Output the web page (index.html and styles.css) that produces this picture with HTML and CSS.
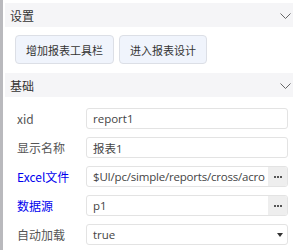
FILE: index.html
```html
<!DOCTYPE html>
<html lang="zh">
  <head>
    <meta charset="UTF-8" />
    <title>属性</title>
    <link rel="stylesheet" href="styles.css">
  </head>
  <body>
    <div class="panel">
      <div class="section-head">
        <span>设置</span>
        <svg class="chev" width="11" height="7" viewBox="0 0 11 7"><path d="M0.5 0.5 L5.5 5.5 L10.5 0.5" fill="none" stroke="#666" stroke-width="1"/></svg>
      </div>
      <div class="actions">
        <button class="btn">增加报表工具栏</button>
        <button class="btn">进入报表设计</button>
      </div>

      <div class="section-head">
        <span>基础</span>
        <svg class="chev" width="11" height="7" viewBox="0 0 11 7"><path d="M0.5 0.5 L5.5 5.5 L10.5 0.5" fill="none" stroke="#666" stroke-width="1"/></svg>
      </div>
      <div class="form">
        <div class="row">
          <label>xid</label>
          <div class="field"><span class="val">report1</span></div>
        </div>
        <div class="row">
          <label>显示名称</label>
          <div class="field"><span class="val">报表1</span></div>
        </div>
        <div class="row">
          <label class="link">Excel文件</label>
          <div class="field">
            <span class="val path">$UI/pc/simple/reports/cross/acro</span>
            <span class="more"><i></i><i></i><i></i></span>
          </div>
        </div>
        <div class="row">
          <label class="link">数据源</label>
          <div class="field">
            <span class="val">p1</span>
            <span class="more"><i></i><i></i><i></i></span>
          </div>
        </div>
        <div class="row">
          <label>自动加载</label>
          <div class="field">
            <span class="val">true</span>
            <span class="caret"></span>
          </div>
        </div>
      </div>
    </div>
  </body>
</html>
```

FILE: styles.css
```css
body {
  margin: 0;
  background: #fff;
  font-family: "Open Sans", "Noto Sans CJK SC", sans-serif;
  font-size: 12px;
  color: #333;
}

.panel {
  border-left: 3px solid #b9b9bd;
  padding: 3px 0 0 2px;
  height: 247px;
}

.section-head {
  height: 24px;
  background: #f5f5f7;
  display: flex;
  align-items: center;
  justify-content: space-between;
  padding: 0 2px 0 5px;
  font-family: "Noto Sans CJK SC", sans-serif;
  font-size: 12px;
  color: #333;
}

.chev {
  margin-top: 2px;
}

.actions {
  display: flex;
  gap: 5px;
  padding: 8px 10px 9px;
}

.btn {
  height: 29px;
  padding: 0 10px;
  border: 1px solid #dcdfe6;
  border-radius: 4px;
  background: #f0f4fc;
  color: #333;
  font-family: "Noto Sans CJK SC", sans-serif;
  font-size: 11px;
}

.form {
  display: flex;
  flex-direction: column;
  gap: 8px;
  padding: 11px 0 0 12px;
}

.row {
  display: flex;
  align-items: center;
}

.row label {
  width: 69px;
  flex: none;
  font-family: "Noto Sans CJK SC", sans-serif;
  font-size: 12px;
  color: #555;
}

.row label.link {
  color: #0000ee;
}

.field {
  width: 202px;
  height: 21px;
  box-sizing: border-box;
  border: 1px solid #e3e3e3;
  border-radius: 3px;
  display: flex;
  align-items: center;
  overflow: hidden;
}

.val {
  flex: 1;
  padding-left: 6px;
  white-space: nowrap;
  overflow: hidden;
  font-size: 11.5px;
  color: #444;
}

.val.path {
  letter-spacing: -0.2px;
}

.more {
  flex: none;
  width: 19px;
  height: 100%;
  background: #eeeeee;
  display: flex;
  align-items: center;
  justify-content: center;
  gap: 1px;
}

.more i {
  width: 2px;
  height: 2px;
  background: #555;
}

.caret {
  flex: none;
  margin: 0 4px 0 4px;
  border-left: 3.5px solid transparent;
  border-right: 3.5px solid transparent;
  border-top: 4px solid #333;
}
```
